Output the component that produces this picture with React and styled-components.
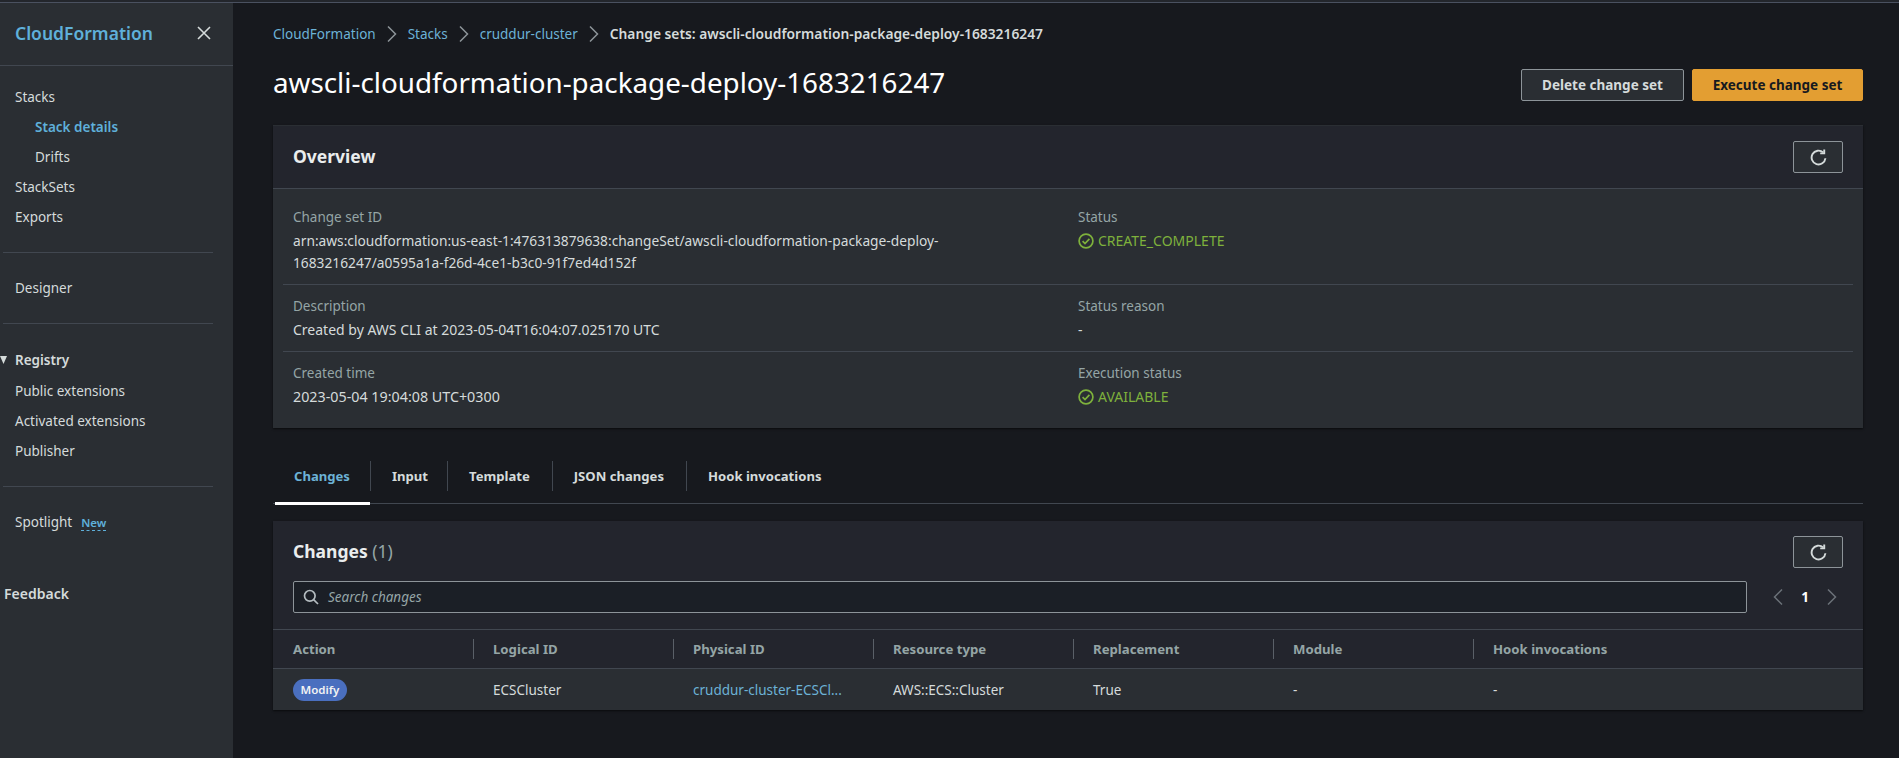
import React from "react";
import styled, { createGlobalStyle } from "styled-components";

const Global = createGlobalStyle`
  html, body { margin: 0; padding: 0; background: #17191e; }
  body { font-family: "Noto Sans", "Open Sans", "Liberation Sans", sans-serif; font-size: 13.5px; color: #d5dbdb; }
  * { box-sizing: border-box; }
`;

const Page = styled.div`
  width: 1899px;
  height: 758px;
  overflow: hidden;
  display: flex;
  flex-direction: column;
`;
const TopLine = styled.div`
  height: 3px;
  background: #23262c;
  border-bottom: 1px solid #4a5160;
  flex: none;
`;
const Body = styled.div`
  flex: 1;
  display: flex;
  min-height: 0;
`;

/* sidebar */
const Side = styled.aside`
  width: 233px;
  flex: none;
  background: #2a2e33;
`;
const SideHead = styled.div`
  height: 63px;
  padding: 0 22px 2px 15px;
  display: flex;
  align-items: center;
  justify-content: space-between;
  border-bottom: 1px solid #414750;
`;
const SideTitle = styled.div`
  font-size: 17.5px;
  font-weight: 600;
  color: #5fb0da;
`;
const SideList = styled.div`
  padding-top: 16px;
  display: flex;
  flex-direction: column;
`;
const SideItem = styled.div`
  height: 30px;
  line-height: 30px;
  padding-left: ${(p) => (p.$sub ? 35 : 15)}px;
  color: ${(p) => (p.$active ? "#5fb0da" : "#d5dbdb")};
  font-weight: ${(p) => (p.$active ? 600 : 400)};
  white-space: nowrap;
`;
const SideRule = styled.div`
  height: 1px;
  background: #414750;
  margin: 20px 20px 20px 3px;
`;
const RegistryHead = styled.div`
  height: 32px;
  display: flex;
  align-items: center;
  gap: 8px;
  font-weight: 600;
  color: #d5dbdb;
  font-size: 13.5px;
`;
const NewTag = styled.span`
  margin-left: 9px;
  font-size: 11.5px;
  font-weight: 600;
  color: #5fb0da;
  border-bottom: 1px dashed #5fb0da;
  line-height: 14px;
  display: inline-block;
`;
const Feedback = styled.div`
  margin-top: 42px;
  padding-left: 4px;
  font-weight: 600;
  line-height: 30px;
  color: #d5dbdb;
  font-size: 14px;
`;

/* main */
const Main = styled.main`
  flex: 1;
  min-width: 0;
  padding: 0 36px 0 40px;
`;
const Crumbs = styled.nav`
  height: 62px;
  padding-bottom: 1px;
  display: flex;
  align-items: center;
  font-size: 13.5px;
`;
const Crumb = styled.span`
  color: ${(p) => (p.$current ? "#d5dbdb" : "#6cb2d6")};
  font-weight: ${(p) => (p.$current ? 600 : 400)};
  font-size: ${(p) => (p.$current ? "13.8px" : "13.5px")};
`;
const CrumbSep = styled.span`
  display: inline-flex;
  width: 32px;
  justify-content: center;
  color: #8d9499;
`;
const TitleRow = styled.div`
  height: 60px;
  display: flex;
  align-items: flex-start;
  justify-content: space-between;
`;
const Title = styled.h1`
  margin: 0;
  font-size: 27.8px;
  line-height: 34px;
  font-weight: 400;
  color: #fff;
`;
const Actions = styled.div`
  display: flex;
  gap: 8px;
  margin-top: 4px;
`;
const Btn = styled.button`
  height: 32px;
  padding: 0;
  width: ${(p) => p.$w}px;
  font-family: inherit;
  font-size: 13.5px;
  font-weight: 700;
  border-radius: 2px;
  color: ${(p) => (p.$primary ? "#16191f" : "#d5dbdb")};
  background: ${(p) => (p.$primary ? "#e39e32" : "#2a2e33")};
  border: 1px solid ${(p) => (p.$primary ? "#e39e32" : "#8d9499")};
`;
const IconBtn = styled.button`
  width: 50px;
  height: 32px;
  padding: 0;
  display: flex;
  align-items: center;
  justify-content: center;
  background: #2a2e33;
  border: 1px solid #8d9499;
  border-radius: 2px;
  color: #d5dbdb;
`;
const Card = styled.section`
  background: #2a2e33;
  box-shadow: 0 1px 2px rgba(0, 0, 0, 0.6);
`;
const CardHead = styled.div`
  height: 64px;
  background: #23252d;
  border-top: 1px solid #2a2e33;
  border-bottom: 1px solid #414750;
  padding: 0 20px;
  display: flex;
  align-items: center;
  justify-content: space-between;
`;
const CardTitle = styled.h2`
  margin: 0 0 2px;
  font-size: 17.5px;
  font-weight: 700;
  color: #eaeded;
`;
const Count = styled.span`
  font-weight: 400;
  color: #95a5a6;
`;
const OverviewRow = styled.div`
  margin: 0 10px;
  padding: ${(p) => p.$pt}px 10px 0;
  height: ${(p) => p.$h}px;
  display: grid;
  grid-template-columns: 775px 775px;
  column-gap: 10px;
  border-bottom: ${(p) => (p.$last ? "none" : "1px solid #414750")};
`;
const Label = styled.div`
  color: #95a5a6;
  line-height: 24px;
`;
const Value = styled.div`
  margin-top: 1px;
  line-height: 22px;
  font-size: ${(p) => p.$size || 14}px;
  color: #d5dbdb;
  width: 700px;
  overflow-wrap: anywhere;
`;
const StatusText = styled.div`
  line-height: 24px;
  font-size: 14px;
  color: #7eb13c;
  display: flex;
  align-items: center;
  gap: 4px;
`;
const Tabs = styled.div`
  margin-top: 31px;
  height: 45px;
  display: flex;
  border-bottom: 1px solid #414750;
`;
const Tab = styled.div`
  position: relative;
  height: ${(p) => (p.$active ? "46px" : "45px")};
  padding: 0 ${(p) => p.$pr ?? 22}px 0 ${(p) => p.$pl ?? 22}px;
  line-height: 34px;
  font-weight: 700;
  font-size: 13.1px;
  color: ${(p) => (p.$active ? "#6cb2d6" : "#d5dbdb")};
  margin-left: ${(p) => p.$ml || 0}px;
  white-space: nowrap;
  border-bottom: ${(p) => (p.$active ? "3px solid #fff" : "none")};
  &::after {
    content: "";
    display: ${(p) => (p.$end ? "none" : "block")};
    position: absolute;
    right: -1px;
    top: 2px;
    height: 30px;
    width: 1px;
    background: #414750;
  }
`;
const ChangesCard = styled(Card)`
  margin-top: 17px;
  background: #23252d;
`;
const ChangesHead = styled.div`
  height: 60px;
  padding: 2px 20px 0;
  display: flex;
  align-items: center;
  justify-content: space-between;
`;
const FilterRow = styled.div`
  padding: 0 16px 0 20px;
  display: flex;
  align-items: center;
`;
const Search = styled.div`
  width: 1454px;
  height: 32px;
  flex: none;
  background: #1b1f26;
  border: 1px solid #8d9499;
  border-radius: 2px;
  display: flex;
  align-items: center;
  padding-left: 9px;
  gap: 9px;
  font-style: italic;
  color: #95a5a6;
  font-size: 13.5px;
`;
const Pager = styled.div`
  flex: 1;
  display: flex;
  align-items: center;
  justify-content: space-between;
  padding: 0 7px 0 23px;
  color: #fff;
  font-weight: 700;
  font-size: 13.5px;
`;
const Table = styled.div`
  margin-top: 16px;
  border-top: 1px solid #414750;
`;
const Row = styled.div`
  display: grid;
  grid-template-columns: repeat(6, 200px) 1fr;
  align-items: center;
  height: ${(p) => p.$h}px;
  background: ${(p) => p.$bg};
  border-bottom: ${(p) => (p.$head ? "1px solid #414750" : "none")};
`;
const Th = styled.div`
  height: 20px;
  line-height: 20px;
  padding-left: ${(p) => (p.$first ? 20 : 19)}px;
  font-weight: 700;
  color: #95a5a6;
  font-size: 13.2px;
  border-left: ${(p) => (p.$first ? "none" : "1px solid #5a6068")};
`;
const Td = styled.div`
  padding-left: 20px;
  color: ${(p) => (p.$link ? "#6cb2d6" : "#d5dbdb")};
  white-space: nowrap;
`;
const Badge = styled.span`
  display: inline-block;
  width: 54px;
  height: 22px;
  line-height: 21px;
  text-align: center;
  border-radius: 11px;
  background: #4a6fbf;
  color: #f2f3f3;
  font-size: 11.5px;
  font-weight: 600;
`;

const Refresh = () => (
  <svg width="17" height="17" viewBox="0 0 16 16" fill="none" stroke="currentColor" strokeWidth="1.8">
    <path d="M14.5 8.7A6.5 6.5 0 1 1 12.4 3.2" />
    <path d="M13.4 0.4v3.7H9.6" />
  </svg>
);
const Check = () => (
  <svg width="16" height="16" viewBox="0 0 16 16" fill="none" stroke="#7eb13c" strokeWidth="1.7">
    <circle cx="8" cy="8" r="6.9" />
    <path d="M4.6 8.1l2.4 2.4 4.4-4.6" />
  </svg>
);
const Chevron = ({ left, color = "#8d9499" }) => (
  <svg width="16" height="16" viewBox="0 0 16 16" fill="none" stroke={color} strokeWidth="1.5">
    <path d={left ? "M12 0.5L4.5 8l7.5 7.5" : "M4 0.5L11.5 8 4 15.5"} />
  </svg>
);
const Close = () => (
  <svg width="14" height="14" viewBox="0 0 14 14" fill="none" stroke="#d5dbdb" strokeWidth="1.6">
    <path d="M1 1l12 12M13 1L1 13" />
  </svg>
);
const SearchIcon = () => (
  <svg width="16" height="16" viewBox="0 0 16 16" fill="none" stroke="#b4bcc0" strokeWidth="1.7">
    <circle cx="6.8" cy="6.8" r="5.3" />
    <path d="M10.6 10.6l4.4 4.4" />
  </svg>
);
const Triangle = () => (
  <svg width="7" height="8" viewBox="0 0 7 8" fill="#d5dbdb">
    <path d="M0 0h7L3.5 8z" />
  </svg>
);

const crumbs = ["CloudFormation", "Stacks", "cruddur-cluster"];
const columns = ["Action", "Logical ID", "Physical ID", "Resource type", "Replacement", "Module", "Hook invocations"];

export default function App() {
  return (
    <Page>
      <Global />
      <TopLine />
      <Body>
        <Side>
          <SideHead>
            <SideTitle>CloudFormation</SideTitle>
            <Close />
          </SideHead>
          <SideList>
            <SideItem>Stacks</SideItem>
            <SideItem $sub $active>Stack details</SideItem>
            <SideItem $sub>Drifts</SideItem>
            <SideItem>StackSets</SideItem>
            <SideItem>Exports</SideItem>
            <SideRule />
            <SideItem>Designer</SideItem>
            <SideRule />
            <RegistryHead><Triangle />Registry</RegistryHead>
            <SideItem>Public extensions</SideItem>
            <SideItem>Activated extensions</SideItem>
            <SideItem>Publisher</SideItem>
            <SideRule />
            <SideItem>Spotlight<NewTag>New</NewTag></SideItem>
            <Feedback>Feedback</Feedback>
          </SideList>
        </Side>
        <Main>
          <Crumbs>
            {crumbs.map((c) => (
              <React.Fragment key={c}>
                <Crumb>{c}</Crumb>
                <CrumbSep><Chevron /></CrumbSep>
              </React.Fragment>
            ))}
            <Crumb $current>Change sets: awscli-cloudformation-package-deploy-1683216247</Crumb>
          </Crumbs>
          <TitleRow>
            <Title>awscli-cloudformation-package-deploy-1683216247</Title>
            <Actions>
              <Btn $w={163}>Delete change set</Btn>
              <Btn $w={171} $primary>Execute change set</Btn>
            </Actions>
          </TitleRow>
          <Card>
            <CardHead>
              <CardTitle>Overview</CardTitle>
              <IconBtn><Refresh /></IconBtn>
            </CardHead>
            <OverviewRow $h={96} $pt={16}>
              <div>
                <Label>Change set ID</Label>
                <Value $size={13.75}>arn:aws:cloudformation:us-east-1:476313879638:changeSet/awscli-cloudformation-package-deploy-1683216247/a0595a1a-f26d-4ce1-b3c0-91f7ed4d152f</Value>
              </div>
              <div>
                <Label>Status</Label>
                <StatusText><Check />CREATE_COMPLETE</StatusText>
              </div>
            </OverviewRow>
            <OverviewRow $h={67} $pt={9}>
              <div>
                <Label>Description</Label>
                <Value>Created by AWS CLI at 2023-05-04T16:04:07.025170 UTC</Value>
              </div>
              <div>
                <Label>Status reason</Label>
                <Value>-</Value>
              </div>
            </OverviewRow>
            <OverviewRow $h={76} $pt={9} $last>
              <div>
                <Label>Created time</Label>
                <Value $size={14.3}>2023-05-04 19:04:08 UTC+0300</Value>
              </div>
              <div>
                <Label>Execution status</Label>
                <StatusText><Check />AVAILABLE</StatusText>
              </div>
            </OverviewRow>
          </Card>
          <Tabs>
            <Tab $active $ml={2} $pl={19} $pr={20}>Changes</Tab>
            <Tab $pr={19}>Input</Tab>
            <Tab>Template</Tab>
            <Tab>JSON changes</Tab>
            <Tab $end>Hook invocations</Tab>
          </Tabs>
          <ChangesCard>
            <ChangesHead>
              <CardTitle>Changes <Count>(1)</Count></CardTitle>
              <IconBtn><Refresh /></IconBtn>
            </ChangesHead>
            <FilterRow>
              <Search><SearchIcon />Search changes</Search>
              <Pager>
                <Chevron left color="#6b7178" />
                1
                <Chevron color="#6b7178" />
              </Pager>
            </FilterRow>
            <Table>
              <Row $head $h={39} $bg="#23252d">
                {columns.map((c, i) => (
                  <Th key={c} $first={i === 0}>{c}</Th>
                ))}
              </Row>
              <Row $h={41} $bg="#2a2e33">
                <Td><Badge>Modify</Badge></Td>
                <Td>ECSCluster</Td>
                <Td $link>cruddur-cluster-ECSCl...</Td>
                <Td>AWS::ECS::Cluster</Td>
                <Td>True</Td>
                <Td>-</Td>
                <Td>-</Td>
              </Row>
            </Table>
          </ChangesCard>
        </Main>
      </Body>
    </Page>
  );
}
